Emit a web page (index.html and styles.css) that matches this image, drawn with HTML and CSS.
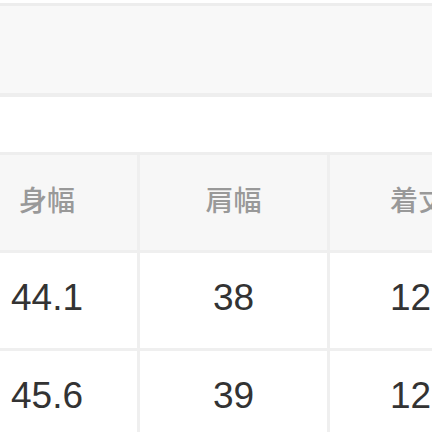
FILE: index.html
```html
<!DOCTYPE html>
<html lang="ja">
<head>
<meta charset="utf-8">
<link rel="stylesheet" href="styles.css">
</head>
<body>
<div class="page">
  <div class="band"></div>
  <div class="spacer"></div>
  <div class="table">
    <div class="cell head">身幅</div>
    <div class="cell head">肩幅</div>
    <div class="cell head last">着丈</div>
    <div class="cell">44.1</div>
    <div class="cell">38</div>
    <div class="cell last">12</div>
    <div class="cell">45.6</div>
    <div class="cell">39</div>
    <div class="cell last">12</div>
  </div>
</div>
</body>
</html>
```
FILE: styles.css
```css
html, body {
  margin: 0;
  padding: 0;
  background: #ffffff;
  width: 432px;
  height: 432px;
  overflow: hidden;
}
.page {
  padding-top: 3px;
}
.band {
  height: 87px;
  background: #f8f8f8;
  border-top: 3px solid #ededed;
  border-bottom: 4px solid #eeeeee;
}
.spacer {
  height: 55px;
}
.table {
  margin-left: -43px;
  width: 560px;
  display: grid;
  grid-template-columns: 180px 187px 187px;
  grid-auto-rows: 95px;
  column-gap: 3px;
  row-gap: 3px;
  background: #efefef;
  border-top: 3px solid #eeeeee;
}
.cell {
  background: #ffffff;
  display: flex;
  align-items: center;
  justify-content: center;
  padding-bottom: 6px;
  box-sizing: border-box;
  font-family: "Liberation Sans", Arial, sans-serif;
  font-size: 37px;
  color: #333333;
}
.cell.head {
  background: #f7f7f7;
  font-family: "Noto Sans CJK JP", sans-serif;
  font-size: 28px;
  font-weight: 500;
  color: #999999;
  padding-bottom: 8px;
}
.cell.last {
  justify-content: flex-start;
  padding-left: 60px;
}
```
